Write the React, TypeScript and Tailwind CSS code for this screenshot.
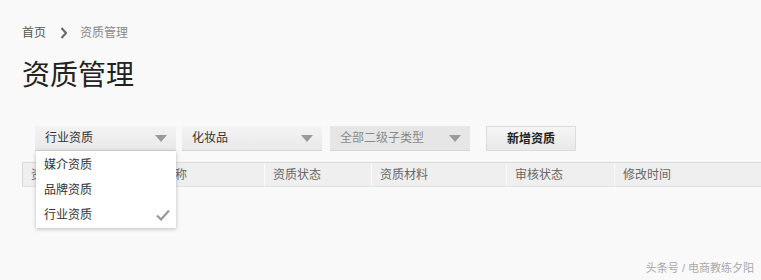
import React from 'react';

const font = { fontFamily: '"Liberation Sans", "Noto Sans CJK SC", sans-serif' };

function Caret() {
  return (
    <svg width="12" height="7" viewBox="0 0 12 7" className="shrink-0">
      <path d="M0 0 L12 0 L6 7 Z" fill="#9a9a9a" />
    </svg>
  );
}

function SelectBox({ label, disabled, width }: { label: string; disabled?: boolean; width: string }) {
  return (
    <div
      className={`${width} h-[25px] flex items-center justify-between pl-[10px] pr-[9px] border-b border-[#d6d6d6] ${
        disabled ? 'bg-[#e6e6e6] text-[#8a8a8a]' : 'bg-gradient-to-b from-[#f3f3f3] to-[#e9e9e9] text-[#333]'
      }`}
    >
      <span className="text-[12px]">{label}</span>
      <Caret />
    </div>
  );
}

const columns = [
  { label: '资质ID', w: 'w-[109px]' },
  { label: '资质名称', w: 'w-[134px]' },
  { label: '资质状态', w: 'w-[107px]' },
  { label: '资质材料', w: 'w-[135px]' },
  { label: '审核状态', w: 'w-[108px]' },
  { label: '修改时间', w: 'flex-1' },
];

export default function App() {
  return (
    <div className="w-[761px] h-[280px] bg-[#f9f9f9] overflow-hidden relative" style={font}>
      <div className="pl-[22px] pt-[24px]">
        <div className="flex items-center text-[12px] h-[18px]">
          <span className="text-[#555]">首页</span>
          <svg width="8" height="12" viewBox="0 0 8 12" className="ml-[14px] mr-[12px]">
            <path d="M1.5 1 L6 6 L1.5 11" fill="none" stroke="#666" strokeWidth="2" />
          </svg>
          <span className="text-[#888]">资质管理</span>
        </div>
        <h1 className="mt-[15px] text-[28px] leading-[38px] text-[#222] font-normal">资质管理</h1>
      </div>

      <div className="relative mt-[31px] pl-[35px] flex items-center">
        <SelectBox label="行业资质" width="w-[141px]" />
        <div className="w-[6px]" />
        <SelectBox label="化妆品" width="w-[140px]" />
        <div className="w-[8px]" />
        <SelectBox label="全部二级子类型" disabled width="w-[140px]" />
        <button className="ml-[16px] w-[90px] h-[25px] bg-gradient-to-b from-[#f5f5f5] to-[#e8e8e8] border border-[#dcdcdc] text-[12px] font-bold text-[#222]">
          新增资质
        </button>

        <div className="absolute left-[36px] top-[25px] w-[140px] bg-white shadow-[0_1px_4px_rgba(0,0,0,0.25)] z-10 py-[1px]">
          {['媒介资质', '品牌资质', '行业资质'].map((t, i) => (
            <div key={t} className="h-[25px] flex items-center justify-between pl-[8px] pr-[6px] text-[12px] text-[#333]">
              <span>{t}</span>
              {i === 2 && (
                <svg width="14" height="12" viewBox="0 0 14 12">
                  <path d="M1 6.5 L5 10.5 L13 1.5" fill="none" stroke="#999" strokeWidth="2.2" />
                </svg>
              )}
            </div>
          ))}
        </div>
      </div>

      <div className="ml-[22px] mt-[11px] flex h-[25px] bg-[#efefef] border-t border-[#dadada] border-b border-b-[#e2e2e2]">
        {columns.map((c, i) => (
          <div
            key={c.label}
            className={`${c.w} flex items-center pl-[8px] text-[12px] text-[#666] ${i < columns.length - 1 ? 'border-r border-[#fafafa]' : ''} ${i === 0 ? 'border-l border-l-[#dadada]' : ''}`}
          >
            {c.label}
          </div>
        ))}
      </div>

      <div className="absolute right-[7px] bottom-[4px] text-[11px] text-[#aaa]">头条号 / 电商教练夕阳</div>
    </div>
  );
}
